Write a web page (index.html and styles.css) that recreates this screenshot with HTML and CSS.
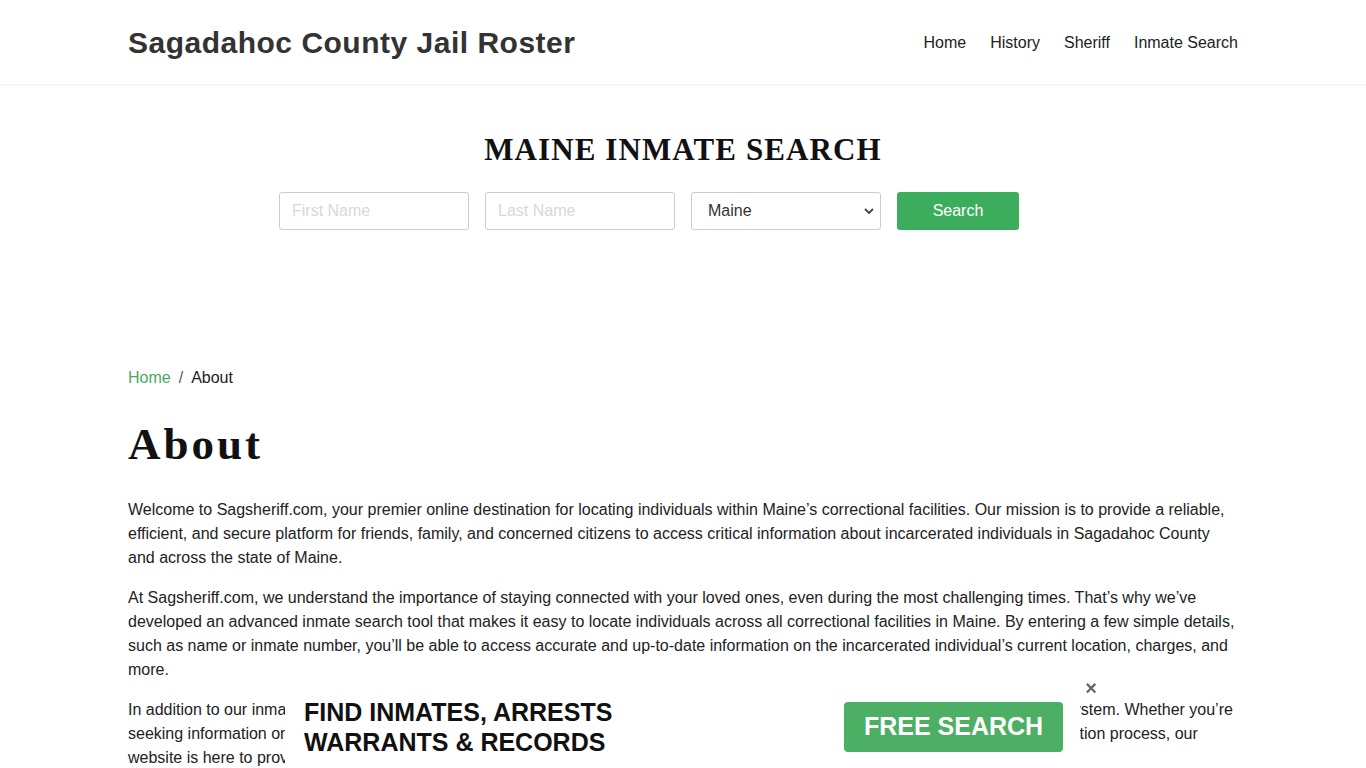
FILE: index.html
```html
<!DOCTYPE html>
<html lang="en">
<head>
<meta charset="utf-8">
<title>About - Sagadahoc County Jail Roster</title>
<link rel="stylesheet" href="styles.css">
</head>
<body>
<header class="site-header">
  <div class="container header-row">
    <a class="brand" href="#">Sagadahoc County Jail Roster</a>
    <nav class="main-nav">
      <a href="#">Home</a>
      <a href="#">History</a>
      <a href="#">Sheriff</a>
      <a href="#">Inmate Search</a>
    </nav>
  </div>
</header>

<section class="search-section">
  <div class="container">
    <h2 class="search-title">MAINE INMATE SEARCH</h2>
    <form class="search-form">
      <input class="field" type="text" placeholder="First Name">
      <input class="field" type="text" placeholder="Last Name">
      <div class="select-wrap">
        <select class="field select">
          <option>Maine</option>
        </select>
        <svg class="chev" width="10" height="6" viewBox="0 0 10 6"><path d="M1 1 L5 5 L9 1" fill="none" stroke="#444" stroke-width="1.8"/></svg>
      </div>
      <button class="btn-search" type="button">Search</button>
    </form>
  </div>
</section>

<main class="container content">
  <nav class="breadcrumb">
    <a href="#">Home</a><span class="sep">/</span><span class="current">About</span>
  </nav>
  <h1 class="page-title">About</h1>
  <p>Welcome to Sagsheriff.com, your premier online destination for locating individuals within Maine’s correctional facilities. Our mission is to provide a reliable, efficient, and secure platform for friends, family, and concerned citizens to access critical information about incarcerated individuals in Sagadahoc County and across the state of Maine.</p>
  <p>At Sagsheriff.com, we understand the importance of staying connected with your loved ones, even during the most challenging times. That’s why we’ve developed an advanced inmate search tool that makes it easy to locate individuals across all correctional facilities in Maine. By entering a few simple details, such as name or inmate number, you’ll be able to access accurate and up-to-date information on the incarcerated individual’s current location, charges, and more.</p>
  <p>In addition to our inmate search tool, Sagsheriff.com offers a suite of resources to help you better understand the Maine correctional system. Whether you’re seeking information on visitation rules, inmate mail, phone calls, commissary accounts, bail bonds, court dates, or the inmate classification process, our website is here to provide the guidance and support you need.</p>
</main>

<div class="promo">
  <div class="promo-text">FIND INMATES, ARRESTS<br>WARRANTS &amp; RECORDS</div>
  <a class="promo-btn" href="#">FREE SEARCH</a>
  <span class="promo-close">×</span>
</div>
</body>
</html>
```

FILE: styles.css
```css
* { box-sizing: border-box; }

html, body {
  margin: 0;
  padding: 0;
}

body {
  font-family: "Liberation Sans", Arial, sans-serif;
  font-size: 16px;
  line-height: 1.5;
  color: #222;
  background: #fff;
}

a { text-decoration: none; }

.container {
  width: 1110px;
  margin: 0 auto;
}

.site-header {
  height: 85px;
  border-bottom: 1px solid #f0f0f0;
  box-shadow: 0 1px 3px rgba(0,0,0,0.04);
}

.header-row {
  height: 84px;
  display: flex;
  align-items: center;
  justify-content: space-between;
}

.brand {
  font-size: 30px;
  font-weight: bold;
  color: #333;
  letter-spacing: 0.5px;
}

.main-nav {
  display: flex;
  gap: 24px;
  padding-top: 2px;
}

.main-nav a {
  color: #222;
  font-size: 16px;
}

.search-section {
  padding-top: 45px;
  height: 281px;
}

.search-title {
  margin: 0;
  text-align: center;
  font-family: "Liberation Serif", "Times New Roman", serif;
  font-size: 31px;
  font-weight: bold;
  letter-spacing: 1.1px;
  line-height: 40px;
  color: #111;
}

.search-form {
  margin: 22px 0 0 151px;
  display: flex;
  gap: 16px;
}

.field {
  width: 190px;
  height: 38px;
  border: 1px solid #ccc;
  border-radius: 3px;
  padding: 0 12px;
  font-family: "Liberation Sans", Arial, sans-serif;
  font-size: 16px;
  color: #333;
  background: #fff;
}

.field::placeholder { color: #d8d8d8; }

.select-wrap {
  position: relative;
  width: 190px;
}

.select {
  appearance: none;
  -webkit-appearance: none;
  padding-left: 16px;
  padding-bottom: 1px;
}

.chev {
  position: absolute;
  right: 7px;
  top: 16px;
  pointer-events: none;
}

.btn-search {
  width: 122px;
  height: 38px;
  border: none;
  border-radius: 3px;
  background: #3cad5d;
  color: #fff;
  font-family: "Liberation Sans", Arial, sans-serif;
  font-size: 16px;
}

.content {
  padding-bottom: 40px;
}

.breadcrumb {
  line-height: 24px;
  margin-bottom: 26px;
}

.breadcrumb a { color: #4aa85f; }
.breadcrumb .sep { color: #555; padding: 0 8px; }
.breadcrumb .current { color: #222; }

.page-title {
  margin: 0 0 26px;
  font-family: "Liberation Serif", "Times New Roman", serif;
  font-size: 45px;
  font-weight: bold;
  letter-spacing: 3px;
  line-height: 56px;
  color: #111;
}

p {
  margin: 0 0 16px;
}

.promo {
  position: fixed;
  left: 285px;
  bottom: 0;
  width: 795px;
  height: 78px;
  background: #fff;
  display: flex;
  align-items: center;
  justify-content: space-between;
  padding: 0 17px 4px 19px;
}

.promo-text {
  font-size: 25px;
  font-weight: bold;
  line-height: 30px;
  color: #111;
}

.promo-btn {
  width: 219px;
  height: 50px;
  border-radius: 4px;
  background: #4caf63;
  color: #fff;
  font-size: 25px;
  font-weight: bold;
  display: flex;
  align-items: center;
  justify-content: center;
}

.promo-close {
  position: absolute;
  right: -17px;
  top: -12px;
  font-size: 20px;
  line-height: 20px;
  color: #666;
  font-weight: bold;
}
```
